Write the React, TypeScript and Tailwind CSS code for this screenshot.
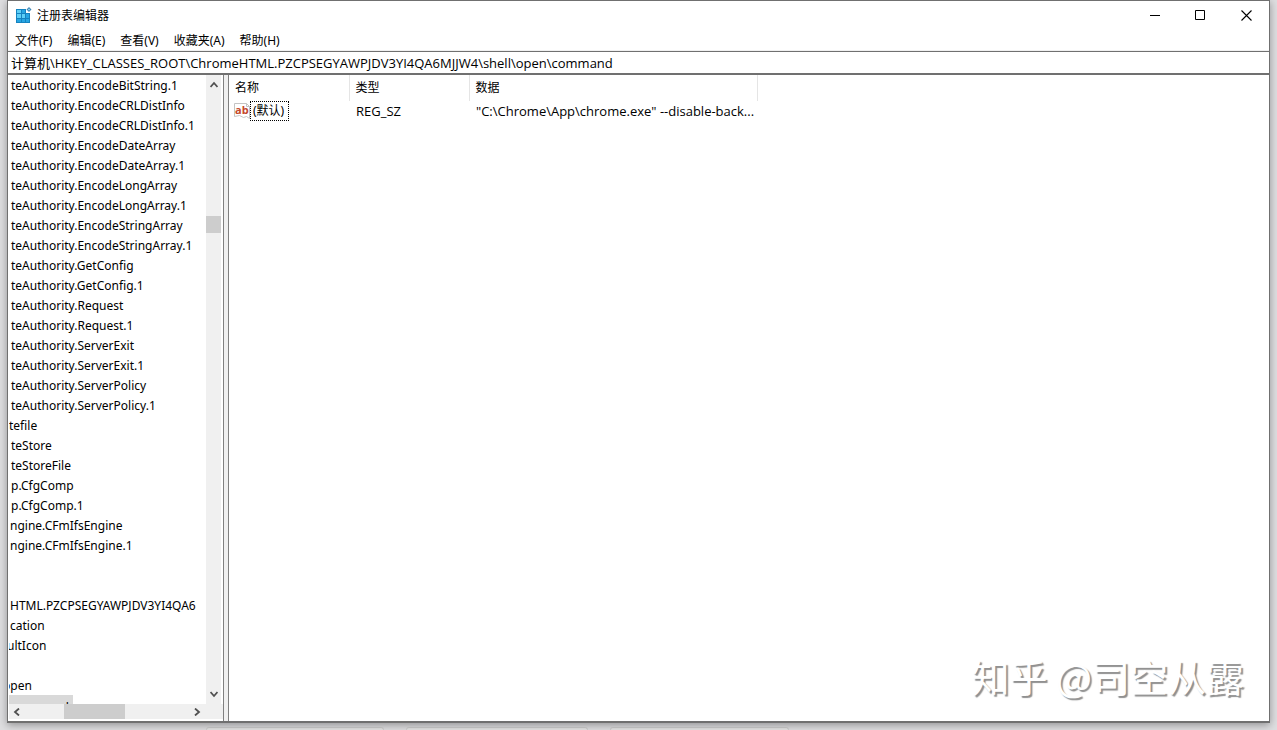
const menus = ['文件(F)', '编辑(E)', '查看(V)', '收藏夹(A)', '帮助(H)'];

type Row = { text: string; shift?: string };
const A = 'teAuthority.';
const rows: Row[] = [
  ...[
    'EncodeBitString.1', 'EncodeCRLDistInfo', 'EncodeCRLDistInfo.1', 'EncodeDateArray', 'EncodeDateArray.1',
    'EncodeLongArray', 'EncodeLongArray.1', 'EncodeStringArray', 'EncodeStringArray.1', 'GetConfig', 'GetConfig.1',
    'Request', 'Request.1', 'ServerExit', 'ServerExit.1', 'ServerPolicy', 'ServerPolicy.1',
  ].map((t) => ({ text: A + t })),
  { text: 'tefile', shift: 'ml-0' },
  { text: 'teStore' },
  { text: 'teStoreFile' },
  { text: 'p.CfgComp' },
  { text: 'p.CfgComp.1' },
  { text: 'ngine.CFmIfsEngine', shift: 'ml-px' },
  { text: 'ngine.CFmIfsEngine.1', shift: 'ml-px' },
  { text: '' },
  { text: '' },
  { text: 'HTML.PZCPSEGYAWPJDV3YI4QA6', shift: 'ml-px' },
  { text: 'cation', shift: 'ml-px' },
  { text: 'ultIcon', shift: '-ml-0.5' },
  { text: '' },
  { text: 'open', shift: '-ml-1.5' },
];

function Chevron({ d }: { d: string }) {
  return (
    <svg className="h-2 w-2" viewBox="0 0 8 8" fill="none" stroke="#505050" strokeWidth="1.8">
      <path d={d} />
    </svg>
  );
}

function RegistryIcon() {
  return (
    <svg className="h-4 w-4 shrink-0" viewBox="0 0 16 16">
      <path d="M0 2h10v4h4v10H0z" fill="#1583c0" />
      <path d="M1 3h4v3H1zM1 7h4v4H1zM6 7h3v4H6z" fill="#5fd0f7" />
      <path d="M6 3h3v3H6zM10 7h3v4h-3zM1 12h4v3H1zM6 12h3v3H6zM10 12h3v3h-3z" fill="#27a5e2" />
      <path d="M13 0 15.500 2.500 13 5 10.500 2.500z" fill="#3f86b5" />
      <path d="M13 1.400 14.100 2.500 13 3.600 11.900 2.500z" fill="#9adcf5" />
    </svg>
  );
}

function StringIcon() {
  return (
    <svg className="h-4 w-4 shrink-0" viewBox="0 0 16 16">
      <path d="M.5 .5h12l3 3v12l-3-2-3 1-4-2-5 1z" fill="#fff" stroke="#c4c4c4" />
      <path d="M12.500 .5v3h3" fill="none" stroke="#c4c4c4" />
      <text x="1" y="11" fontSize="11" fontWeight="700" fontFamily="Open Sans, sans-serif" fill="#c4472b">ab</text>
    </svg>
  );
}

export default function App() {
  return (
    <div className="flex h-screen flex-col overflow-hidden bg-[#dedee0] px-[7px] font-['Open_Sans','Noto_Sans_CJK_SC',sans-serif] text-[13px] leading-5 text-black">
      <main className="relative flex min-h-0 flex-1 flex-col border border-[#707070] bg-white shadow-[0_2px_8px_rgba(0,0,0,0.35)]">
        <header className="flex h-7 shrink-0 items-center pl-2">
          <RegistryIcon />
          <h1 className="ml-[5px] flex-1 pt-0.5 text-xs">注册表编辑器</h1>
          <button aria-label="最小化" className="flex h-7 w-[45px] items-center justify-center">
            <svg className="h-[11px] w-[11px]" viewBox="0 0 11 11"><path d="M0 5.500h10" stroke="#000" /></svg>
          </button>
          <button aria-label="最大化" className="flex h-7 w-[45px] items-center justify-center">
            <svg className="h-[11px] w-[11px]" viewBox="0 0 11 11"><path d="M.5 .5h9v9h-9z" stroke="#000" fill="none" /></svg>
          </button>
          <button aria-label="关闭" className="flex h-7 w-[46px] items-center justify-center">
            <svg className="h-[11px] w-[11px]" viewBox="0 0 11 11"><path d="M.5 .5l10 10M10.500 .5l-10 10" stroke="#000" strokeWidth="1.100" /></svg>
          </button>
        </header>
        <nav className="flex h-[22px] shrink-0 items-center gap-[15px] border-b border-[#f0f0f0] pt-0.5 pl-[7px] font-['Noto_Sans','Noto_Sans_CJK_SC',sans-serif] text-xs">
          {menus.map((m) => <button key={m}>{m}</button>)}
        </nav>
        <input
          aria-label="地址"
          className="h-6 w-full shrink-0 border-t border-b-2 border-[#707070] pl-[3px] outline-none"
          defaultValue="计算机\HKEY_CLASSES_ROOT\ChromeHTML.PZCPSEGYAWPJDV3YI4QA6MJJW4\shell\open\command"
        />
        <div className="flex min-h-0 flex-1 border-b border-[#707070]">
          <aside className="flex w-[216px] shrink-0 flex-col border-r border-[#808080] pl-px">
            <div className="flex min-h-0 flex-1">
              <ul className="min-w-0 flex-1 overflow-hidden font-['Noto_Sans',sans-serif] text-xs leading-[22px] whitespace-nowrap">
                {rows.map((r, i) => (
                  <li key={i} className={`h-5 ${r.shift ?? 'ml-0.5'}`}>{r.text}</li>
                ))}
                <li className="flex h-6 w-16 items-end justify-end bg-[#d9d9d9] pr-1">command</li>
              </ul>
              <div className="mr-0.5 flex w-[15px] flex-col items-center bg-[#f0f0f0] py-1.5">
                <Chevron d="M.5 6 4 2 7.500 6" />
                <div className="flex-[127]" />
                <div className="h-[17px] w-full bg-[#cdcdcd]" />
                <div className="flex-[455]" />
                <Chevron d="M.5 2 4 6 7.500 2" />
              </div>
            </div>
            <div className="mb-0.5 flex h-[15px] shrink-0 items-center bg-[#f0f0f0] px-1">
              <Chevron d="M6 .5 2 4 6 7.500" />
              <div className="flex-[42]" />
              <div className="h-full w-[61px] bg-[#cdcdcd]" />
              <div className="flex-[67]" />
              <Chevron d="M2 .5 6 4 2 7.500" />
              <div className="w-[18px]" />
            </div>
          </aside>
          <div className="w-1 bg-[#f0f0f0]" />
          <section className="min-w-0 flex-1 border-l border-[#808080]">
            <table className="table-fixed border-collapse text-left">
              <colgroup>
                <col className="w-[120px]" />
                <col className="w-[120px]" />
                <col className="w-[288px]" />
              </colgroup>
              <thead>
                <tr className="h-[26px] text-xs">
                  {['名称', '类型', '数据'].map((h) => (
                    <th key={h} className="border-r border-[#e5e5e5] pl-1.5 font-normal">{h}</th>
                  ))}
                </tr>
              </thead>
              <tbody>
                <tr className="h-5 whitespace-nowrap">
                  <td className="p-0 pl-[5px]">
                    <div className="flex items-center">
                      <StringIcon />
                      <span className="border border-dotted border-black pr-1 pl-0.5 font-['Noto_Sans','Noto_Sans_CJK_SC',sans-serif] text-xs leading-[18px]">(默认)</span>
                    </div>
                  </td>
                  <td className="p-0 pl-[7px] leading-[18px]">REG_SZ</td>
                  <td className="p-0 pl-[7px] leading-[18px]">"C:\Chrome\App\chrome.exe" --disable-back...</td>
                </tr>
              </tbody>
            </table>
          </section>
        </div>
        <div className="pointer-events-none absolute right-[25px] bottom-5 font-['Noto_Sans_CJK_SC',sans-serif] text-[38px] leading-[52px] text-white [text-shadow:2px_2px_1px_#909090]">
          知乎 @司空从露
        </div>
      </main>
      <footer className="flex h-[7px] shrink-0 gap-[22px] pt-1 pl-[199px]">
        <div className="w-[178px] rounded-t border border-b-0 border-[#cfcfcf] bg-[#e4e4e4]" />
        <div className="w-[182px] rounded-t border border-b-0 border-[#cfcfcf] bg-[#e4e4e4]" />
        <div className="w-[179px] rounded-t border border-b-0 border-[#cfcfcf] bg-[#e4e4e4]" />
      </footer>
    </div>
  );
}
